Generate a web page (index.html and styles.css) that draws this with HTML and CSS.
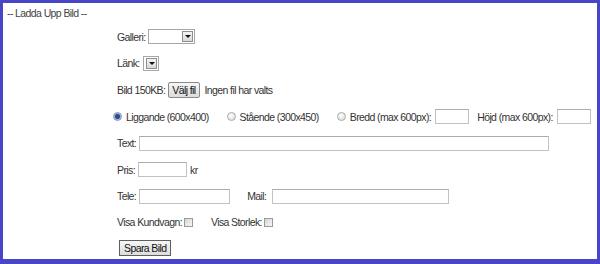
FILE: index.html
```html
<!DOCTYPE html>
<html lang="sv">
<head>
    <meta charset="UTF-8">
    <title>Ladda Upp Bild</title>
    <link rel="stylesheet" href="styles.css">
</head>
<body>
    <div class="frame">
        <div class="legend">-- Ladda Upp Bild --</div>

        <form class="upload-form">
            <div class="row row-first">
                <span class="label">Galleri:</span>
                <span class="select select-wide"><span class="select-btn"></span></span>
            </div>

            <div class="row">
                <span class="label">Länk:</span>
                <span class="select select-narrow"><span class="select-btn"></span></span>
            </div>

            <div class="row row-tall">
                <span class="label">Bild 150KB:</span>
                <span class="button">Välj fil</span>
                <span class="file-name">Ingen fil har valts</span>
            </div>

            <div class="row row-radios">
                <label class="radio-item"><span class="radio checked"></span>Liggande (600x400)</label>
                <label class="radio-item"><span class="radio"></span>Stående (300x450)</label>
                <label class="radio-item"><span class="radio"></span>Bredd (max 600px):<span class="input input-size"></span></label>
                <label class="radio-item radio-item-last">Höjd (max 600px):<span class="input input-size"></span></label>
            </div>

            <div class="row">
                <span class="label">Text:</span>
                <span class="input input-text"></span>
            </div>

            <div class="row row-tall">
                <span class="label">Pris:</span>
                <span class="input input-price"></span>
                <span class="unit">kr</span>
            </div>

            <div class="row">
                <span class="label">Tele:</span>
                <span class="input input-tele"></span>
                <span class="label label-mail">Mail:</span>
                <span class="input input-mail"></span>
            </div>

            <div class="row">
                <span class="label label-check">Visa Kundvagn:</span>
                <span class="checkbox"></span>
                <span class="label label-check label-storlek">Visa Storlek:</span>
                <span class="checkbox"></span>
            </div>

            <div class="row row-submit">
                <span class="button button-submit">Spara Bild</span>
            </div>
        </form>
    </div>
</body>
</html>
```

FILE: styles.css
```css
* {
    margin: 0;
    padding: 0;
    box-sizing: border-box;
}

body {
    font-family: 'Liberation Sans', Arial, sans-serif;
    font-size: 10.5px;
    letter-spacing: -0.6px;
    color: #333;
    background: white;
}

.frame {
    width: 600px;
    height: 264px;
    border-style: solid;
    border-color: #4646c6;
    border-width: 3px 3px 5px 3px;
    background: white;
}

.legend {
    padding: 4px 0 0 4px;
    line-height: 13px;
    color: #444;
}

.upload-form {
    padding: 3px 0 0 114px;
}

.row {
    display: flex;
    align-items: center;
    height: 26px;
    white-space: nowrap;
}

.row-first {
    height: 27px;
}

.row-tall {
    height: 27px;
}

.row-radios {
    height: 27px;
    margin-left: -4px;
    gap: 18px;
}

.row-submit {
    height: 25px;
}

.label {
    margin-right: 3px;
}

.label-check {
    margin-right: 2px;
}

.label-mail {
    margin-left: 17px;
    margin-right: 6px;
}

.label-storlek {
    margin-left: 18px;
}

/* fake select boxes */
.select {
    display: inline-flex;
    justify-content: flex-end;
    align-items: center;
    height: 15px;
    border: 1px solid #a7a7a7;
    background: white;
    padding-right: 1px;
}

.select-wide {
    width: 47px;
}

.select-narrow {
    width: 16px;
}

.select-btn {
    position: relative;
    width: 11px;
    height: 11px;
    border: 1px solid #8e8e8e;
    background: linear-gradient(#f4f4f4, #d9d9d9);
}

.select-btn::after {
    content: '';
    position: absolute;
    left: 2px;
    top: 3px;
    border-left: 3px solid transparent;
    border-right: 3px solid transparent;
    border-top: 3px solid #111;
}

.button {
    display: inline-flex;
    align-items: center;
    height: 16px;
    padding: 0 3px;
    border: 1px solid #8a8a8a;
    border-radius: 2px;
    background: linear-gradient(#f6f6f6, #dcdcdc);
    color: #111;
}

.file-name {
    margin-left: 5px;
}

.button-submit {
    margin-left: 2px;
    border-radius: 0;
    border-color: #5e5e5e;
    padding: 0 4px;
}

.radio-item {
    display: inline-flex;
    align-items: center;
}

.radio-item-last {
    margin-left: -10px;
}

.radio {
    width: 9px;
    height: 9px;
    margin-right: 4px;
    border-radius: 50%;
    border: 1px solid #a9a9a9;
    background: radial-gradient(circle at 40% 35%, #fff, #d8d8d8);
}

.radio.checked {
    background: radial-gradient(circle, #2a4a8c 0 2px, #9ab0d4 3px, #e4e8f0 4px);
    border-color: #8592b0;
}

.input {
    display: inline-block;
    height: 15px;
    border: 1px solid #c2c2c2;
    border-top-color: #acacac;
    background: white;
}

.input-size {
    width: 34px;
    margin-left: 4px;
}

.input-text {
    width: 410px;
}

.input-price {
    width: 49px;
}

.unit {
    margin-left: 3px;
}

.input-tele {
    width: 91px;
}

.input-mail {
    width: 177px;
}

.checkbox {
    width: 9px;
    height: 9px;
    border: 1px solid #9a9a9a;
    background: linear-gradient(135deg, #d6d6d6, #f6f6f6);
}
```
